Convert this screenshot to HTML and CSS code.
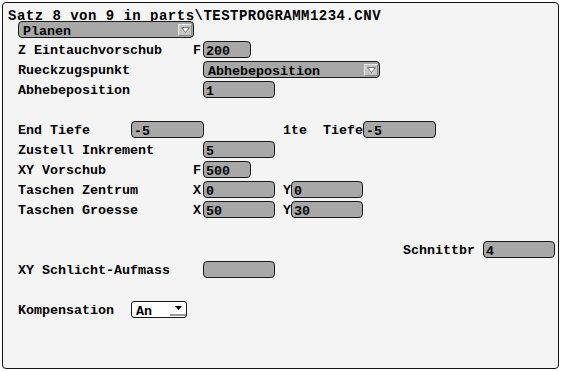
FILE: index.html
```html
<!DOCTYPE html>
<html>
<head>
<meta charset="utf-8">
<link rel="stylesheet" href="styles.css">
</head>
<body>
<div class="frame">
  <div class="title">Satz 8 von 9 in parts\TESTPROGRAMM1234.CNV</div>
  <div class="form">
    <div class="dd planen r1"><span>Planen</span><span class="btn"><svg width="9" height="6" viewBox="0 0 9 6"><path d="M0.5 0.5 H8.5 L4.5 5.5 Z" fill="#fff" stroke="#777" stroke-width="1"/></svg></span></div>

    <div class="lbl r2">Z Eintauchvorschub</div>
    <div class="pre r2">F</div>
    <div class="in c4 w48 r2">200</div>

    <div class="lbl r3">Rueckzugspunkt</div>
    <div class="dd abhebe c4 r3"><span>Abhebeposition</span><span class="btn"><svg width="9" height="6" viewBox="0 0 9 6"><path d="M0.5 0.5 H8.5 L4.5 5.5 Z" fill="#fff" stroke="#777" stroke-width="1"/></svg></span></div>

    <div class="lbl r4">Abhebeposition</div>
    <div class="in c4 w72 r4">1</div>

    <div class="lbl r6">End Tiefe</div>
    <div class="in c2 w73 r6">-5</div>
    <div class="lbl c5 r6">1te</div>
    <div class="lbl c7 r6">Tiefe</div>
    <div class="in c8 w73 r6">-5</div>

    <div class="lbl r7">Zustell Inkrement</div>
    <div class="in c4 w72 r7">5</div>

    <div class="lbl r8">XY Vorschub</div>
    <div class="pre r8">F</div>
    <div class="in c4 w48 r8">500</div>

    <div class="lbl r9">Taschen Zentrum</div>
    <div class="pre r9">X</div>
    <div class="in c4 w72 r9">0</div>
    <div class="pre c5 r9">Y</div>
    <div class="in c6 w72 r9">0</div>

    <div class="lbl r10">Taschen Groesse</div>
    <div class="pre r10">X</div>
    <div class="in c4 w72 r10">50</div>
    <div class="pre c5 r10">Y</div>
    <div class="in c6 w72 r10">30</div>

    <div class="lbl c9 r12">Schnittbr</div>
    <div class="in c10 w72 r12">4</div>

    <div class="lbl r13">XY Schlicht-Aufmass</div>
    <div class="in c4 w72 r13"></div>

    <div class="lbl r15">Kompensation</div>
    <div class="sel c2 r15"><span>An</span><span class="sbtn"><svg width="7" height="4" viewBox="0 0 7 4"><path d="M0 0 H7 L3.5 4 Z" fill="#000"/></svg></span></div>
  </div>
</div>
</body>
</html>
```

FILE: styles.css
```css
html, body {
  margin: 0;
  padding: 0;
  background: #ffffff;
}
body {
  font-family: "Liberation Mono", "Courier New", monospace;
  font-weight: bold;
  font-size: 13.33px;
  color: #000;
}
.frame {
  margin: 2px;
  width: 557px;
  height: 367px;
  box-sizing: border-box;
  border: 1px solid #111;
  border-radius: 4px;
  background: #f4f4f4;
  padding-left: 5px;
}
.title {
  font-size: 14px;
  letter-spacing: 0.48px;
  height: 16px;
  box-sizing: border-box;
  padding-top: 6px;
  line-height: 14px;
  white-space: nowrap;
}
.form {
  display: grid;
  margin-left: 10px;
  grid-template-columns: 113px 62px 10px 80px 8px 32px 40px 40px 80px 72px;
  grid-template-rows: repeat(15, 20px);
}
.lbl {
  grid-column: 1 / 3;
  line-height: 20px;
  margin-top: 2px;
  white-space: nowrap;
}
.pre {
  grid-column: 3;
  line-height: 20px;
  margin-top: 2px;
}
.in, .dd, .sel {
  box-sizing: border-box;
  height: 17px;
  margin-top: 2px;
  border: 1px solid #1a1a1a;
  border-radius: 4px;
  background: #a8a8a8;
  padding: 3px 0 0 2px;
  line-height: 13px;
  white-space: nowrap;
  justify-self: start;
  align-self: start;
}
.c2 { grid-column: 2 / 4; }
.c4 { grid-column: 4 / 7; }
.c5 { grid-column: 5 / 7; }
.c6 { grid-column: 6 / 8; }
.c7 { grid-column: 7; }
.c8 { grid-column: 8 / 10; }
.c9 { grid-column: 9; }
.c10 { grid-column: 10; }
.w48 { width: 48px; }
.w72 { width: 72px; }
.w73 { width: 73px; }
.r1 { grid-row: 1; }
.r2 { grid-row: 2; }
.r3 { grid-row: 3; }
.r4 { grid-row: 4; }
.r6 { grid-row: 6; }
.r7 { grid-row: 7; }
.r8 { grid-row: 8; }
.r9 { grid-row: 9; }
.r10 { grid-row: 10; }
.r12 { grid-row: 12; }
.r13 { grid-row: 13; }
.r15 { grid-row: 15; }
.dd {
  display: flex;
  justify-content: space-between;
  padding: 3px 1px 0 4px;
}
.planen {
  grid-column: 1 / 4;
  width: 176px;
}
.abhebe {
  grid-column: 4 / 10;
  width: 177px;
}
.btn {
  width: 14px;
  height: 12px;
  box-sizing: border-box;
  margin-top: -1px;
  background: #c6c6c6;
  border-top: 1px solid #e8e8e8;
  border-left: 1px solid #e8e8e8;
  border-right: 1px solid #8a8a8a;
  border-bottom: 1px solid #8a8a8a;
  display: flex;
  align-items: center;
  justify-content: center;
}
.sel {
  width: 56px;
  background: #ffffff;
  border-radius: 3px;
  display: flex;
  justify-content: space-between;
  padding: 3px 0 0 4px;
}
.sbtn {
  width: 16px;
  height: 14px;
  margin-top: -3px;
  box-sizing: border-box;
  border-bottom: 2px solid #9a9a9a;
  display: flex;
  align-items: center;
  justify-content: center;
}
```
